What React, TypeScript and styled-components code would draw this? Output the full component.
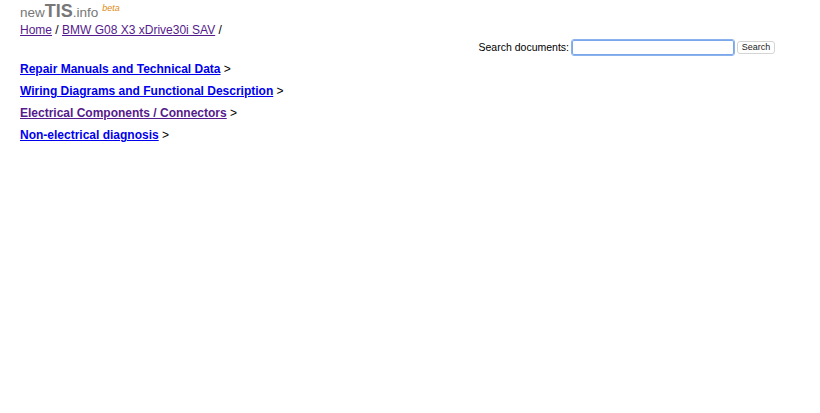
import React from 'react'
import styled, { createGlobalStyle } from 'styled-components'

const GlobalStyle = createGlobalStyle`
  html, body {
    margin: 0;
    padding: 0;
    background: #fff;
  }
  body {
    font-family: "Liberation Sans", Arial, Helvetica, sans-serif;
    font-size: 12px;
    color: #000;
  }
`

const MENU = [
  { label: 'Repair Manuals and Technical Data', visited: false },
  { label: 'Wiring Diagrams and Functional Description', visited: false },
  { label: 'Electrical Components / Connectors', visited: true },
  { label: 'Non-electrical diagnosis', visited: false }
]

function App (): React.ReactElement {
  return (
    <>
      <GlobalStyle />
      <StyledPage>
        <StyledLogo>
          new<StyledLogoStrong>TIS</StyledLogoStrong>.info
          <StyledBeta>beta</StyledBeta>
        </StyledLogo>
        <StyledCrumbs>
          <StyledLink href="#" $visited>Home</StyledLink> /{' '}
          <StyledLink href="#" $visited>BMW G08 X3 xDrive30i SAV</StyledLink> /
        </StyledCrumbs>
        <StyledSearchRow>
          <StyledLabel htmlFor="q">Search documents:</StyledLabel>
          <StyledInput id="q" type="text" />
          <StyledButton type="button">Search</StyledButton>
        </StyledSearchRow>
        <StyledMenu>
          {MENU.map((item) =>
            <StyledMenuItem key={item.label}>
              <StyledMenuLink href="#" $visited={item.visited}>{item.label}</StyledMenuLink> &gt;
            </StyledMenuItem>
          )}
        </StyledMenu>
      </StyledPage>
    </>
  )
}

export default App

const StyledPage = styled.div`
  padding: 0 45px 0 20px;
`
const StyledLogo = styled.div`
  color: #777;
  font-size: 13.5px;
  line-height: 17px;
  height: 18px;
  white-space: nowrap;
`
const StyledLogoStrong = styled.b`
  font-size: 18px;
  font-weight: bold;
`
const StyledBeta = styled.span`
  color: #e08a10;
  font-style: italic;
  font-size: 9px;
  margin-left: 4px;
  vertical-align: 6px;
`
const StyledCrumbs = styled.div`
  font-size: 12px;
  line-height: 16px;
  margin-top: 4px;
`
const StyledLink = styled.a<{ $visited?: boolean }>`
  color: ${p => p.$visited ? '#551a8b' : '#0000ee'};
  text-decoration: underline;
`
const StyledSearchRow = styled.form`
  display: flex;
  justify-content: flex-end;
  align-items: center;
  margin-top: 0;
  height: 18px;
`
const StyledLabel = styled.label`
  font-size: 10.5px;
  margin-right: 3px;
`
const StyledInput = styled.input`
  box-sizing: border-box;
  width: 162px;
  height: 15px;
  padding: 0 2px;
  border: 1px solid #7aa7e9;
  outline: 1px solid #8cb2ee;
  border-radius: 2px;
  font-size: 10px;
`
const StyledButton = styled.button`
  box-sizing: border-box;
  font-family: "Liberation Sans", Arial, sans-serif;
  font-size: 9px;
  width: 38px;
  height: 13px;
  padding: 0;
  margin-left: 3px;
  line-height: 11px;
  background: #fff;
  border: 1px solid #d4d4d4;
  border-radius: 3px;
  color: #222;
`
const StyledMenu = styled.div`
  margin-top: 2px;
`
const StyledMenuItem = styled.div`
  font-size: 12px;
  line-height: 22px;
`
const StyledMenuLink = styled(StyledLink)`
  font-weight: bold;
`
